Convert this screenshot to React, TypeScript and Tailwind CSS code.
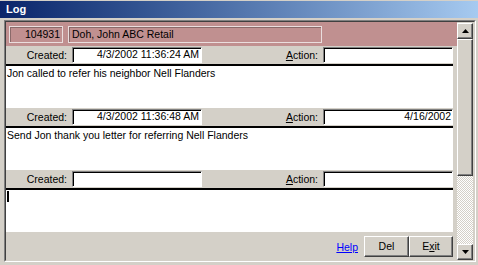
import React from "react";

const raised =
  "border border-t-white border-l-white border-r-[#404040] border-b-[#404040] shadow-[inset_-1px_-1px_0_#808080]";
const sunkenField =
  "border border-t-[#808080] border-l-[#808080] border-r-white border-b-white shadow-[inset_1px_1px_0_#000]";

function Row({ created, action }: { created: string; action: string }) {
  return (
    <div className="flex h-[18px] bg-[#d4d0c8]">
      <div className="w-[61px] text-right leading-[18px]">Created:</div>
      <div className={`ml-[5px] mt-[1px] h-[16px] w-[130px] bg-white text-right pr-[2px] leading-[13px] ${sunkenField}`}>
        {created}
      </div>
      <div className="w-[116px] text-right leading-[18px]">
        <span className="underline">A</span>ction:
      </div>
      <div className={`ml-[5px] mt-[1px] h-[16px] w-[130px] bg-white text-right pr-[1px] leading-[13px] ${sunkenField}`}>
        {action}
      </div>
    </div>
  );
}

function Note({ text, h, cursor }: { text?: string; h: string; cursor?: boolean }) {
  return (
    <div className={`${h} mr-[4px] bg-white border-t-2 border-black pl-[1px] pt-[1px] leading-[13px]`}>
      {text}
      {cursor && <div className="mt-[0px] h-[11px] w-[2px] bg-black" />}
    </div>
  );
}

function Arrow({ up }: { up?: boolean }) {
  return (
    <div className={`h-[16px] w-[16px] bg-[#d4d0c8] flex items-center justify-center ${raised}`}>
      <svg width="7" height="4" viewBox="0 0 7 4">
        {up ? <polygon points="3.5,0 7,4 0,4" fill="#000" /> : <polygon points="0,0 7,0 3.5,4" fill="#000" />}
      </svg>
    </div>
  );
}

export default function App() {
  return (
    <div
      className="w-[478px] h-[265px] bg-[#d4d0c8] overflow-hidden flex flex-col text-[10.5px] text-black"
      style={{ fontFamily: '"Liberation Sans", Arial, sans-serif' }}
    >
      <div className="h-[1px]" />
      <div className="h-[17px] bg-linear-to-r from-[#0a246a] to-[#a6caf0] flex items-center pl-[6px]">
        <span className="text-white font-bold text-[11px]">Log</span>
      </div>
      <div className="h-[2px]" />
      <div className="ml-[4px] w-[472px] border border-t-[#808080] border-l-[#808080] border-r-white border-b-white">
        <div className="border border-t-[#404040] border-l-[#404040] border-r-[#d4d0c8] border-b-[#d4d0c8] flex h-[240px]">
          <div className="w-[451px] flex flex-col">
            <div className="h-[24px] bg-[#c09090] flex items-start pt-[4px] pl-[3px] gap-[5px]">
              <div className="h-[17px] w-[54px] border border-[#eadede] shadow-[inset_1px_1px_0_#8a6a6a] text-right pr-[2px] leading-[14px]">
                104931
              </div>
              <div className="h-[17px] w-[254px] border border-[#eadede] shadow-[inset_1px_1px_0_#8a6a6a] pl-[3px] leading-[14px]">
                Doh, John ABC Retail
              </div>
            </div>
            <Row created="4/3/2002 11:36:24 AM" action="" />
            <Note h="h-[44px]" text="Jon called to refer his neighbor Nell Flanders" />
            <Row created="4/3/2002 11:36:48 AM" action="4/16/2002" />
            <Note h="h-[44px]" text="Send Jon thank you letter for referring Nell Flanders" />
            <Row created="" action="" />
            <Note h="h-[44px]" cursor />
            <div className="flex-1 flex justify-end items-start pt-[4px] pr-[4px]">
              <a className="text-[#0000ff] underline mr-[6px] mt-[5px] leading-[13px]">Help</a>
              <div className={`h-[21px] w-[45px] bg-[#d4d0c8] flex items-center justify-center ${raised}`}>Del</div>
              <div className={`h-[21px] w-[44px] bg-[#d4d0c8] flex items-center justify-center ${raised}`}>
                <span>
                  E<span className="underline">x</span>it
                </span>
              </div>
            </div>
          </div>
          <div className="w-[17px] flex flex-col pt-[1px] pr-[1px]">
            <Arrow up />
            <div className={`h-[137px] w-[16px] bg-[#d4d0c8] ${raised}`} />
            <div className="flex-1 w-[16px] bg-[repeating-conic-gradient(#d4d0c8_0%_25%,#ffffff_0%_50%)] bg-[length:2px_2px]" />
            <Arrow />
          </div>
        </div>
      </div>
    </div>
  );
}
